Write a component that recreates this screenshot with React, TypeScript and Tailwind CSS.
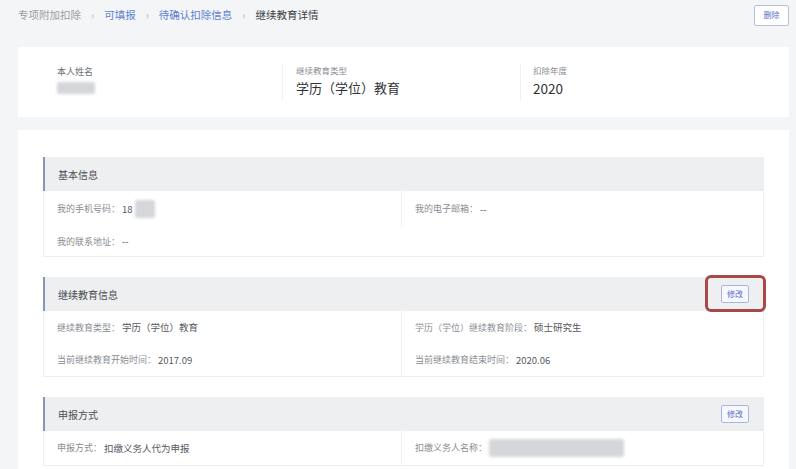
import React from "react";

type Cell = {
  label: string;
  value?: string;
  blur?: number;
};

function Blur({ w, h }: { w: number; h: number }) {
  return (
    <span
      className="block rounded-[2px] bg-[#d4d6da] blur-[1.5px]"
      style={{ width: w, height: h }}
    />
  );
}

function EditButton() {
  return (
    <button className="flex h-[18px] w-[28px] items-center justify-center rounded-[2px] border border-[#aab6dc] bg-[#f7f8ff] text-[8px] text-[#5a72c8]">
      修改
    </button>
  );
}

function InfoCell({ cell, divider }: { cell: Cell; divider: boolean }) {
  return (
    <div
      className={`flex items-center gap-[2px] pl-[13px] ${
        divider ? "border-r border-[#f0f1f3]" : ""
      }`}
    >
      <span className="text-[9px] text-[#8a8d93]">{cell.label}：</span>
      {cell.value && (
        <span className="text-[9.5px] text-[#55585e]">{cell.value}</span>
      )}
      {cell.blur ? <Blur w={cell.blur} h={18} /> : null}
    </div>
  );
}

function Section({
  title,
  rows,
  edit,
  highlight,
}: {
  title: string;
  rows: { cells: Cell[]; h: number }[];
  edit?: boolean;
  highlight?: boolean;
}) {
  return (
    <div className="border-x border-b border-[#eceef1] bg-white">
      <div className="relative -mx-px flex h-[34px] items-center justify-between border-l-2 border-[#8796b8] bg-[#eeeff1] pl-[13px] pr-[15px]">
        <span className="text-[10px] text-[#4a4d52]">{title}</span>
        {edit && <EditButton />}
        {highlight && (
          <div className="absolute right-[-2px] top-[-2px] h-[37px] w-[61px] rounded-[6px] border-[3px] border-[#a9484b]" />
        )}
      </div>
      {rows.map((row, i) => (
        <div
          key={i}
          className="grid grid-cols-[358px_1fr]"
          style={{ height: row.h }}
        >
          <InfoCell cell={row.cells[0]} divider={row.cells.length > 1} />
          {row.cells[1] ? <InfoCell cell={row.cells[1]} divider={false} /> : <div />}
        </div>
      ))}
    </div>
  );
}

export default function App() {
  return (
    <div className="flex h-[469px] w-[796px] flex-col overflow-hidden bg-[#f4f5f7] font-['Noto_Sans_CJK_SC',sans-serif]">
      {/* BREADCRUMB */}
      <div className="flex h-[30px] shrink-0 items-center justify-between pl-[18px] pr-[7px]">
        <div className="flex items-center text-[10.5px]">
          <span className="text-[#9a9ca1]">专项附加扣除</span>
          <span className="mx-[10px] text-[#b4b6ba]">›</span>
          <span className="text-[#5e7fd0]">可填报</span>
          <span className="mx-[10px] text-[#b4b6ba]">›</span>
          <span className="text-[#5e7fd0]">待确认扣除信息</span>
          <span className="mx-[10px] text-[#b4b6ba]">›</span>
          <span className="text-[#3c3f44]">继续教育详情</span>
        </div>
        <button className="flex h-[21px] w-[35px] items-center justify-center rounded-[2px] border border-[#b8c0d4] bg-white text-[8px] text-[#5a72c8]">
          删除
        </button>
      </div>

      {/* SUMMARY */}
      <div className="ml-[18px] mt-[17px] flex h-[70px] w-[771px] shrink-0 bg-white">
        <div className="flex w-[264px] flex-col pl-[39px] pt-[18px]">
          <span className="text-[9px] leading-[13px] text-[#6d7075]">本人姓名</span>
          <div className="mt-[4px]">
            <Blur w={38} h={12} />
          </div>
        </div>
        <div className="my-[16px] w-px bg-[#f0f1f3]" />
        <div className="flex w-[237px] flex-col pl-[13px] pt-[17px]">
          <span className="text-[8.5px] text-[#8a8d93]">继续教育类型</span>
          <span className="mt-[1px] text-[13px] text-[#2f3236]">
            学历（学位）教育
          </span>
        </div>
        <div className="my-[16px] w-px bg-[#f0f1f3]" />
        <div className="flex flex-col pl-[12px] pt-[17px]">
          <span className="text-[8.5px] text-[#8a8d93]">扣除年度</span>
          <span className="mt-[1px] text-[13.5px] text-[#2f3236]">2020</span>
        </div>
      </div>

      {/* DETAILS */}
      <div className="ml-[18px] mt-[13px] flex w-[771px] flex-1 flex-col gap-[20px] bg-white px-[25px] pt-[27px]">
        <Section
          title="基本信息"
          rows={[
            {
              h: 36,
              cells: [
                { label: "我的手机号码", value: "18", blur: 20 },
                { label: "我的电子邮箱", value: "--" },
              ],
            },
            { h: 29, cells: [{ label: "我的联系地址", value: "--" }] },
          ]}
        />
        <Section
          title="继续教育信息"
          edit
          highlight
          rows={[
            {
              h: 33,
              cells: [
                { label: "继续教育类型", value: "学历（学位）教育" },
                { label: "学历（学位）继续教育阶段", value: "硕士研究生" },
              ],
            },
            {
              h: 32,
              cells: [
                { label: "当前继续教育开始时间", value: "2017.09" },
                { label: "当前继续教育结束时间", value: "2020.06" },
              ],
            },
          ]}
        />
        <Section
          title="申报方式"
          edit
          rows={[
            {
              h: 34,
              cells: [
                { label: "申报方式", value: "扣缴义务人代为申报" },
                { label: "扣缴义务人名称", blur: 135 },
              ],
            },
          ]}
        />
      </div>
    </div>
  );
}
